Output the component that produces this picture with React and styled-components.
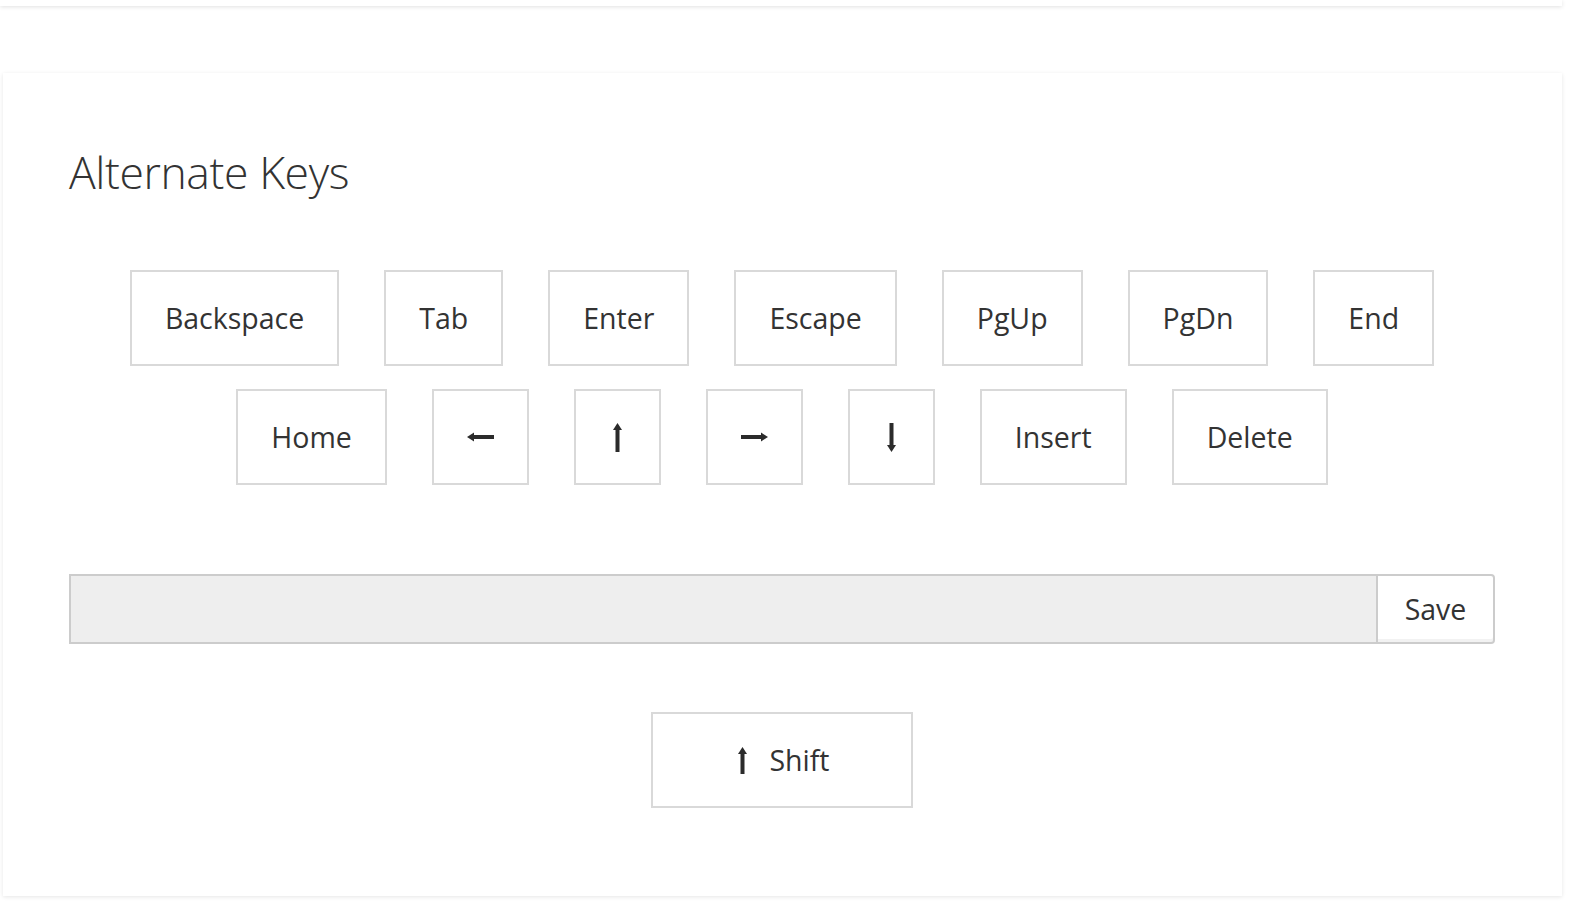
import React from 'react';
import styled, { createGlobalStyle } from 'styled-components';

const GlobalStyle = createGlobalStyle`
  html, body {
    margin: 0;
    padding: 0;
    background: #ffffff;
    font-family: "Open Sans", "Noto Sans", sans-serif;
    color: #333333;
  }
`;

const Page = styled.div`
  width: 1571px;
  height: 906px;
  overflow: hidden;
  background: #ffffff;
`;

const TopBar = styled.div`
  height: 6px;
  margin-right: 9px;
  background: #ffffff;
  box-shadow: 0 1px 4px rgba(0, 0, 0, 0.12);
`;

const Panel = styled.section`
  margin: 67px 9px 0 3px;
  height: 823px;
  box-sizing: border-box;
  padding: 77px 67px 0 66px;
  background: #ffffff;
  box-shadow: 0 1px 4px rgba(0, 0, 0, 0.1);
  display: flex;
  flex-direction: column;
`;

const Title = styled.h1`
  margin: 0;
  font-size: 44.5px;
  line-height: 44px;
  font-weight: 300;
  letter-spacing: -0.4px;
  color: #333333;
`;

const KeyRows = styled.div`
  margin-top: 76px;
  display: flex;
  flex-direction: column;
  gap: 23px;
`;

const KeyRow = styled.div`
  display: flex;
  justify-content: center;
  gap: 45px;
`;

const Key = styled.button`
  height: 96px;
  box-sizing: border-box;
  padding: 0 33px;
  border: 2px solid #d9d9d9;
  border-radius: 0;
  background: #ffffff;
  font-family: "Open Sans", "Noto Sans", sans-serif;
  font-size: 28.5px;
  color: #333333;
  display: inline-flex;
  align-items: center;
  justify-content: center;
  cursor: pointer;
`;

const InputGroup = styled.div`
  margin-top: 89px;
  display: flex;
  height: 70px;
`;

const TextField = styled.input`
  flex: 1;
  box-sizing: border-box;
  height: 100%;
  background: #eeeeee;
  border: 2px solid #cccccc;
  border-right: none;
  border-radius: 0;
  outline: none;
  font-family: "Open Sans", sans-serif;
  font-size: 24px;
  padding: 0 16px;
`;

const SaveButton = styled.button`
  width: 119px;
  height: 100%;
  box-sizing: border-box;
  background: #ffffff;
  border: 2px solid #cccccc;
  border-radius: 0 4px 4px 0;
  box-shadow: inset 0 -3px 0 #f2f2f2;
  font-family: "Open Sans", "Noto Sans", sans-serif;
  font-size: 28.5px;
  color: #333333;
  cursor: pointer;
`;

const ShiftRow = styled.div`
  margin-top: 68px;
  display: flex;
  justify-content: center;
`;

const ShiftKey = styled(Key)`
  width: 262px;
  gap: 18px;
`;

const ArrowH = ({ dir }) => (
  <svg width="27" height="12" viewBox="0 0 27 12" style={{ transform: dir === 'right' ? 'scaleX(-1)' : 'none' }}>
    <rect x="6" y="4" width="21" height="4" fill="#2b2b2b" />
    <polygon points="0,6 7,1.5 7,10.5" fill="#2b2b2b" />
  </svg>
);

const ArrowV = ({ dir, h = 29 }) => (
  <svg width="17" height={h} viewBox={`0 0 17 ${h}`} style={{ transform: dir === 'down' ? 'scaleY(-1)' : 'none' }}>
    <rect x="6.5" y="6" width="4" height={h - 6} fill="#2b2b2b" />
    <polygon points="8.5,0 4,7 13,7" fill="#2b2b2b" />
  </svg>
);

const rowOne = ['Backspace', 'Tab', 'Enter', 'Escape', 'PgUp', 'PgDn', 'End'];

export default function App() {
  return (
    <Page>
      <GlobalStyle />
      <TopBar />
      <Panel>
        <Title>Alternate Keys</Title>
        <KeyRows>
          <KeyRow>
            {rowOne.map(k => (
              <Key key={k}>{k}</Key>
            ))}
          </KeyRow>
          <KeyRow>
            <Key>Home</Key>
            <Key aria-label="Left"><ArrowH dir="left" /></Key>
            <Key aria-label="Up"><ArrowV dir="up" /></Key>
            <Key aria-label="Right"><ArrowH dir="right" /></Key>
            <Key aria-label="Down"><ArrowV dir="down" /></Key>
            <Key>Insert</Key>
            <Key>Delete</Key>
          </KeyRow>
        </KeyRows>
        <InputGroup>
          <TextField type="text" />
          <SaveButton>Save</SaveButton>
        </InputGroup>
        <ShiftRow>
          <ShiftKey>
            <ArrowV dir="up" h={27} />
            <span>Shift</span>
          </ShiftKey>
        </ShiftRow>
      </Panel>
    </Page>
  );
}
